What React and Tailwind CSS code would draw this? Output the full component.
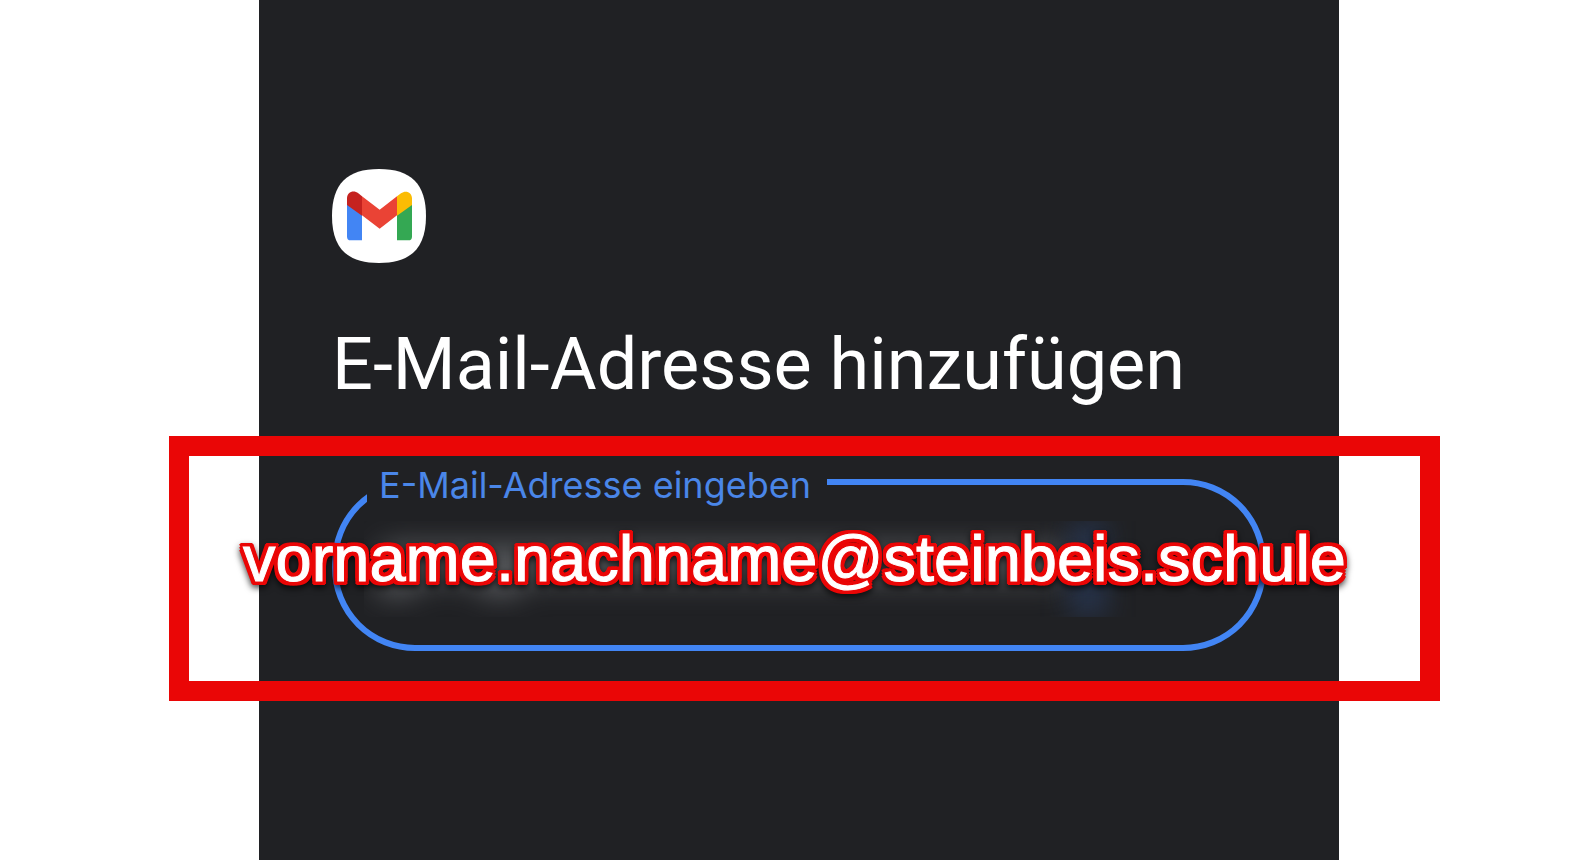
import React, { useState } from 'react';

const GmailIcon = () => (
  <svg viewBox="36 26 282 282" className="size-[94px]" role="img" aria-label="Gmail">
    <path
      d="M177 26C273 26 318 71 318 167S273 308 177 308 36 263 36 167 81 26 177 26Z"
      fill="#fff"
    />
    <path d="M81 130L126 164V240H92Q81 240 81 229Z" fill="#4285f4" />
    <path d="M231 164L276 130V229Q276 240 265 240H231Z" fill="#34a853" />
    <path d="M126 108L179 148L231 108V165L179 205L126 165Z" fill="#ea4335" />
    <path d="M81 134V114C81 95 101 88 115 99L126 108V166Z" fill="#c5221f" />
    <path d="M231 108L243 99C257 88 276 96 276 114V134L231 166Z" fill="#fbbc04" />
  </svg>
);

// Blurred out account name behind the example address
const HiddenAddress = () => (
  <div className="pointer-events-none absolute inset-x-8 top-[66px] flex h-24 overflow-hidden pr-[126px] pl-3">
    <div className="flex flex-1 flex-col justify-center blur-[14px]">
      <div className="h-10 rounded-full bg-[#515356]" />
      <div className="flex h-3 gap-16">
        <div className="w-10 bg-[#606266]" />
        <div className="w-10 bg-[#606266]" />
      </div>
    </div>
    <div className="w-10 bg-[#2c4269]/50 blur-[12px]" />
  </div>
);

const EmailField = () => {
  const [email, setEmail] = useState('');

  return (
    <fieldset className="h-[196px] min-w-0 rounded-[83px] border-[6px] border-[#4285f4] pl-[29px]">
      <legend className="pt-[6px] pr-4 pl-3 font-['Inter',sans-serif] text-[36px] leading-[48px] whitespace-nowrap text-[#4a86e8]">
        <label htmlFor="email">E-Mail-Adresse eingeben</label>
      </legend>
      <input
        id="email"
        type="email"
        value={email}
        onChange={(e) => setEmail(e.target.value)}
        className="h-[120px] w-full bg-transparent px-3 font-['Roboto',sans-serif] text-5xl text-white outline-none"
      />
    </fieldset>
  );
};

const Highlight = ({ children }) => (
  <div className="pointer-events-none absolute -top-[19px] -right-[174px] -bottom-[50px] -left-[163px] flex items-center border-[20px] border-[#ea0606] pb-5 pl-[54px]">
    <p className="font-['Liberation_Sans',Arial,sans-serif] text-[65px] leading-[72px] whitespace-nowrap text-white drop-shadow-[0_3px_3px_rgba(0,0,0,0.7)] [-webkit-text-stroke:1px_white] [text-shadow:4px_0_#ea0606,-4px_0_#ea0606,0_4px_#ea0606,0_-4px_#ea0606,4px_3px_#ea0606,-4px_3px_#ea0606,4px_-3px_#ea0606,-4px_-3px_#ea0606,3px_4px_#ea0606,-3px_4px_#ea0606,3px_-4px_#ea0606,-3px_-4px_#ea0606,2px_2px_#ea0606,-2px_2px_#ea0606,2px_-2px_#ea0606,-2px_-2px_#ea0606]">
      {children}
    </p>
  </div>
);

const App = () => {
  return (
    <div className="flex min-h-screen justify-center overflow-hidden bg-white pl-[10px]">
      <main className="flex w-full max-w-[1080px] flex-col bg-[#202124] px-[73px] pt-[169px]">
        <GmailIcon />
        <h1 className="mt-[60px] mb-12 font-['Roboto',sans-serif] text-7xl leading-[84px] whitespace-nowrap text-white">
          E-Mail-Adresse hinzufügen
        </h1>
        <div className="relative">
          <EmailField />
          <HiddenAddress />
          <Highlight>vorname.nachname@steinbeis.schule</Highlight>
        </div>
      </main>
    </div>
  );
};

export default App;
